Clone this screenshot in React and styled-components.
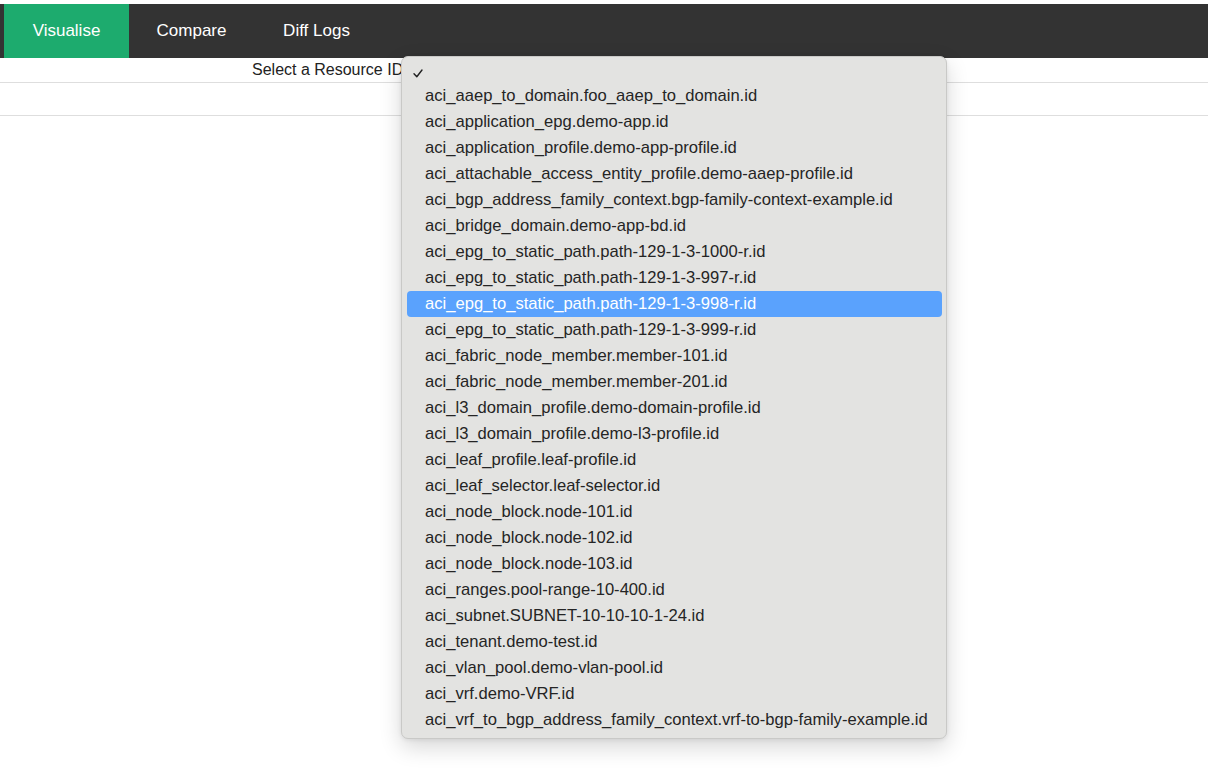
import React from "react";
import styled, { createGlobalStyle } from "styled-components";

const Global = createGlobalStyle`
  html, body { margin: 0; padding: 0; background: #ffffff; }
  body { font-family: "Liberation Sans", Arial, sans-serif; }
`;

const Page = styled.div`
  position: relative;
  width: 1208px;
  height: 776px;
  padding-top: 4px;
  box-sizing: border-box;
  background: #fff;
  overflow: hidden;
`;

const NavBar = styled.nav`
  display: flex;
  height: 54px;
  background: #333333;
  padding-left: 4px;
`;

const Tab = styled.div`
  width: 125px;
  display: flex;
  align-items: center;
  justify-content: center;
  font-size: 17px;
  color: #ffffff;
  background: ${(p) => (p.$active ? "#1dab6e" : "transparent")};
`;

const Row = styled.div`
  display: flex;
  align-items: center;
  height: ${(p) => p.$h}px;
  border-bottom: 1px solid #dedede;
  padding-left: 252px;
  font-size: 16px;
  color: #222;
`;

const Menu = styled.div`
  position: absolute;
  left: 401px;
  top: 56px;
  width: 546px;
  box-sizing: border-box;
  padding: 6px 4px 5px 5px;
  background: #e3e3e1;
  border: 1px solid #c9c9c7;
  border-radius: 7px;
  box-shadow: 0 8px 22px rgba(0, 0, 0, 0.16), 0 1px 4px rgba(0, 0, 0, 0.08);
  display: flex;
  flex-direction: column;
`;

const CheckRow = styled.div`
  height: 20px;
  display: flex;
  align-items: center;
  padding-left: 6px;
`;

const Item = styled.div`
  height: 26px;
  display: flex;
  align-items: center;
  padding-left: 18px;
  border-radius: 4px;
  font-size: 16.6px;
  color: ${(p) => (p.$sel ? "#ffffff" : "#252525")};
  background: ${(p) => (p.$sel ? "#5aa2fd" : "transparent")};
  white-space: nowrap;
`;

const items = [
  "aci_aaep_to_domain.foo_aaep_to_domain.id",
  "aci_application_epg.demo-app.id",
  "aci_application_profile.demo-app-profile.id",
  "aci_attachable_access_entity_profile.demo-aaep-profile.id",
  "aci_bgp_address_family_context.bgp-family-context-example.id",
  "aci_bridge_domain.demo-app-bd.id",
  "aci_epg_to_static_path.path-129-1-3-1000-r.id",
  "aci_epg_to_static_path.path-129-1-3-997-r.id",
  "aci_epg_to_static_path.path-129-1-3-998-r.id",
  "aci_epg_to_static_path.path-129-1-3-999-r.id",
  "aci_fabric_node_member.member-101.id",
  "aci_fabric_node_member.member-201.id",
  "aci_l3_domain_profile.demo-domain-profile.id",
  "aci_l3_domain_profile.demo-l3-profile.id",
  "aci_leaf_profile.leaf-profile.id",
  "aci_leaf_selector.leaf-selector.id",
  "aci_node_block.node-101.id",
  "aci_node_block.node-102.id",
  "aci_node_block.node-103.id",
  "aci_ranges.pool-range-10-400.id",
  "aci_subnet.SUBNET-10-10-10-1-24.id",
  "aci_tenant.demo-test.id",
  "aci_vlan_pool.demo-vlan-pool.id",
  "aci_vrf.demo-VRF.id",
  "aci_vrf_to_bgp_address_family_context.vrf-to-bgp-family-example.id",
];

export default function App() {
  return (
    <Page>
      <Global />
      <NavBar>
        <Tab $active>Visualise</Tab>
        <Tab>Compare</Tab>
        <Tab>Diff Logs</Tab>
      </NavBar>
      <Row $h={24}>Select a Resource ID</Row>
      <Row $h={32} />
      <Menu>
        <CheckRow>
          <svg width="10" height="9" viewBox="0 0 10 9">
            <polyline
              points="1,4.8 3.8,7.8 9,1"
              fill="none"
              stroke="#222"
              strokeWidth="1.4"
              strokeLinecap="round"
              strokeLinejoin="round"
            />
          </svg>
        </CheckRow>
        {items.map((t) => (
          <Item key={t} $sel={t.endsWith("998-r.id")}>
            {t}
          </Item>
        ))}
      </Menu>
    </Page>
  );
}
